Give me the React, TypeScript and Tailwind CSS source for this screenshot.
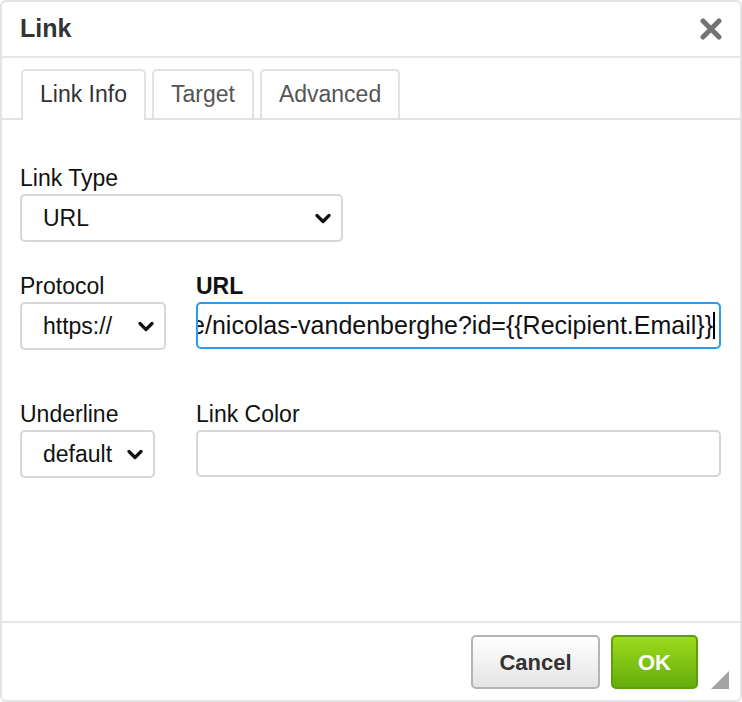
import { ReactNode } from "react";

const font = { fontFamily: '"Liberation Sans", Arial, sans-serif' };

const Chevron = () => (
  <svg width="16" height="11" viewBox="0 0 16 11" className="shrink-0">
    <path d="M2 2.5 L8 8.5 L14 2.5" fill="none" stroke="#111" strokeWidth="3.2" strokeLinecap="round" strokeLinejoin="round" />
  </svg>
);

const Select = ({ value, className }: { value: string; className: string }) => (
  <div
    className={`h-[48px] flex items-center justify-between pl-[21px] pr-[10px] border-2 border-[#d6d6d6] rounded-[5px] bg-white text-[23px] text-[#111] ${className}`}
  >
    <span>{value}</span>
    <Chevron />
  </div>
);

const Label = ({ children, bold }: { children: ReactNode; bold?: boolean }) => (
  <div className={`text-[23px] leading-[26px] mb-[3px] text-[#111] ${bold ? "font-bold" : ""}`}>{children}</div>
);

const Tab = ({ label, active }: { label: string; active?: boolean }) => (
  <div
    className={`flex items-center border-2 border-b-0 border-[#e2e2e2] rounded-t-[5px] bg-white px-[17px] text-[23px] ${
      active ? "h-[51px] -mb-[2px] text-[#333] pb-[2px]" : "h-[49px] text-[#555]"
    }`}
  >
    {label}
  </div>
);

export default function App() {
  return (
    <div style={font} className="w-[742px] h-[702px] bg-white">
      <div className="h-full flex flex-col border-2 border-[#e4e4e4] rounded-[6px] overflow-hidden">
        {/* title bar */}
        <div className="h-[56px] shrink-0 flex items-center justify-between pl-[18px] pr-[18px] border-b-2 border-[#e6e6e6]">
          <span className="text-[25px] font-bold text-[#333]">Link</span>
          <svg width="22" height="22" viewBox="0 0 22 22">
            <path d="M3 3 L19 19 M19 3 L3 19" stroke="#737373" strokeWidth="5" strokeLinecap="round" />
          </svg>
        </div>

        {/* tabs */}
        <div className="shrink-0 flex items-end gap-[6px] pt-[11px] px-[19px] border-b-2 border-[#e2e2e2]">
          <Tab label="Link Info" active />
          <Tab label="Target" />
          <Tab label="Advanced" />
        </div>

        {/* fields */}
        <div className="flex-1 pl-[18px] pr-[19px] pt-[45px]">
          <Label>Link Type</Label>
          <Select value="URL" className="w-[323px]" />

          <div className="grid grid-cols-[176px_minmax(0,1fr)] mt-[31px]">
            <div>
              <Label>Protocol</Label>
              <Select value="https://" className="w-[146px]" />
            </div>
            <div className="min-w-0">
              <Label bold>URL</Label>
              {/* scrolled to the end, so the start of the address is clipped */}
              <div className="h-[47px] flex items-center justify-end overflow-hidden border-2 border-[#2b9bf0] rounded-[5px] pr-[4px] text-[25px] text-[#111] whitespace-nowrap">
                <span className="shrink-0">me/nicolas-vandenberghe?id={"{{"}Recipient.Email{"}}"}</span>
                <span className="w-[2px] h-[27px] bg-black shrink-0" />
              </div>
            </div>
          </div>

          <div className="grid grid-cols-[176px_minmax(0,1fr)] mt-[51px]">
            <div>
              <Label>Underline</Label>
              <Select value="default" className="w-[135px]" />
            </div>
            <div>
              <Label>Link Color</Label>
              <div className="h-[47px] border-2 border-[#d6d6d6] rounded-[5px] bg-white" />
            </div>
          </div>
        </div>

        {/* footer buttons */}
        <div className="h-[79px] shrink-0 flex items-start justify-end gap-[11px] pt-[12px] pr-[10px] border-t-2 border-[#e6e6e6]">
          <button className="h-[54px] w-[129px] rounded-[5px] border-2 border-[#b4b4b4] bg-gradient-to-b from-[#ffffff] to-[#e4e4e4] text-[22px] font-bold text-[#333]">
            Cancel
          </button>
          <button className="h-[54px] w-[87px] rounded-[5px] border-2 border-[#5e9f0c] bg-gradient-to-b from-[#9ddb1c] to-[#65ad0c] text-[22px] font-bold text-white">
            OK
          </button>
          <svg width="20" height="20" viewBox="0 0 20 20" className="self-end mb-[10px] ml-[1px]">
            <path d="M19 1 L19 19 L1 19 Z" fill="#a3a3a3" />
          </svg>
        </div>
      </div>
    </div>
  );
}
